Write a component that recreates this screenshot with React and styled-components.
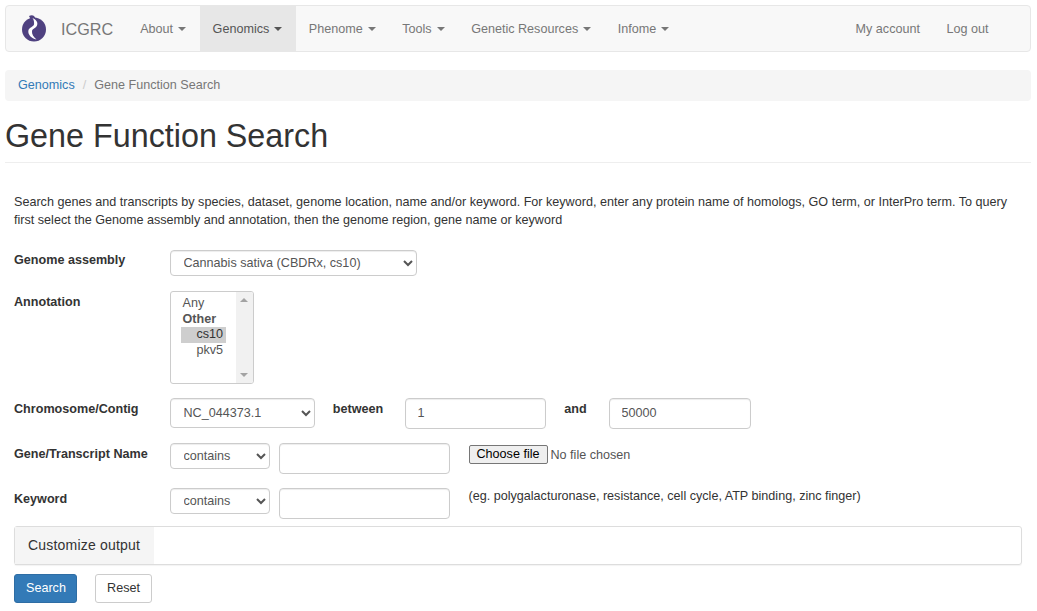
import React from "react";
import styled, { createGlobalStyle } from "styled-components";

const Global = createGlobalStyle`
  html, body { margin: 0; padding: 0; background: #fff; overflow: hidden; }
  body { font-family: "Liberation Sans", Arial, sans-serif; font-size: 12.6px; line-height: 18px; color: #333; }
  * { box-sizing: border-box; }
`;

const Page = styled.div`
  padding: 5px 6px 0 5px;
`;
const Navbar = styled.nav`
  display: flex;
  height: 47px;
  background: #f8f8f8;
  border: 1px solid #e7e7e7;
  border-radius: 4px;
  margin-bottom: 18px;
`;
const Brand = styled.a`
  display: flex;
  align-items: center;
  gap: 14px;
  padding: 0 14px 0 15px;
  font-size: 16.2px;
  color: #777;
`;
const NavItem = styled.a`
  display: flex;
  align-items: center;
  padding: 0 13.5px 0 13px;
  color: ${p => (p.$active ? "#555" : "#777")};
  background: ${p => (p.$active ? "#e7e7e7" : "transparent")};
`;
const Caret = styled.span`
  display: inline-block;
  margin-left: 5px;
  border-top: 4px solid;
  border-left: 4px solid transparent;
  border-right: 4px solid transparent;
`;
const Spacer = styled.div`
  flex: 1;
`;
const NavEnd = styled.div`
  width: 28px;
`;
const Breadcrumb = styled.div`
  height: 31px;
  display: flex;
  align-items: center;
  padding: 0 13px 2px;
  background: #f5f5f5;
  border-radius: 4px;
  margin-bottom: 14px;
  color: #777;
`;
const Crumb = styled.a`
  color: #337ab7;
`;
const Sep = styled.span`
  color: #ccc;
  padding: 0 8px;
`;
const Heading = styled.h1`
  margin: 0;
  font-size: 32.3px;
  font-weight: 400;
  line-height: 36px;
  height: 48px;
  padding-top: 3px;
  border-bottom: 1px solid #eee;
  color: #333;
`;
const Form = styled.form`
  padding: 0 9px;
`;
const Intro = styled.p`
  margin: 30px 0 0;
  line-height: 18px;
`;
const Row = styled.div`
  display: flex;
  align-items: flex-start;
  margin-top: ${p => p.$top}px;
`;
const Label = styled.label`
  width: 155.5px;
  flex: none;
  font-weight: 700;
  line-height: 18px;
  padding-top: ${p => (p.$tight ? 1 : 2)}px;
`;
const Select = styled.select`
  height: ${p => p.$h || 30}px;
  width: ${p => p.$w}px;
  margin-right: ${p => p.$mr || 0}px;
  flex: none;
  padding: 0 9px;
  font: 12.6px "Liberation Sans", Arial, sans-serif;
  color: #555;
  background: #fff;
  border: 1px solid #ccc;
  border-radius: 4px;
  box-shadow: inset 0 1px 1px rgba(0,0,0,.075);
`;
const ListBox = styled.div`
  display: flex;
  width: 84px;
  height: 93px;
  background: #fff;
  border: 1px solid #ccc;
  border-radius: 3px;
  overflow: hidden;
`;
const ListArea = styled.div`
  flex: 1;
  padding: 4px 10px;
  line-height: 15.5px;
  color: #555;
`;
const ListOption = styled.div`
  padding-left: ${p => (p.$nested ? 16 : 2)}px;
  height: 15.5px;
  color: ${p => (p.$selected ? "#333" : "#555")};
  background: ${p => (p.$selected ? "#cecece" : "transparent")};
`;
const ListGroup = styled.div`
  padding-left: 2px;
  height: 15.5px;
  font-weight: 700;
`;
const ScrollTrack = styled.div`
  flex: none;
  width: 17px;
  background: #f1f1f1;
  display: flex;
  flex-direction: column;
  align-items: center;
  justify-content: space-between;
  padding: 6px 0;
`;
const ScrollArrow = styled.span`
  width: 0;
  height: 0;
  border-left: 4px solid transparent;
  border-right: 4px solid transparent;
  ${p => (p.$down ? "border-top: 4px solid #a3a3a3;" : "border-bottom: 4px solid #a3a3a3;")}
`;
const Input = styled.input`
  height: 31px;
  width: ${p => p.$w}px;
  flex: none;
  padding: 0 12px 1px;
  font: 12.6px "Liberation Sans", Arial, sans-serif;
  color: #555;
  border: 1px solid #ccc;
  border-radius: 4px;
  box-shadow: inset 0 1px 1px rgba(0,0,0,.075);
`;
const Conj = styled.b`
  line-height: 18px;
  flex: none;
  width: ${p => p.$w}px;
  padding: 2px 3px 0 0;
  text-align: center;
`;
const FileWrap = styled.div`
  margin-left: 19px;
  margin-top: 2px;
  display: flex;
  align-items: center;
  color: #555;
`;
const FileBtn = styled.button`
  height: 19px;
  width: 79px;
  padding: 0 0 2px;
  font: 12.6px "Liberation Sans", Arial, sans-serif;
  color: #000;
  background: #efefef;
  border: 1px solid #767676;
  border-radius: 2px;
  margin-right: 3px;
`;
const Hint = styled.div`
  margin: 1px 0 0 19px;
  line-height: 15px;
`;
const Accordion = styled.div`
  margin-top: 7px;
  height: 39px;
  border: 1px solid #ddd;
  border-radius: 3px;
  box-shadow: 0 1px 1px rgba(0,0,0,.05);
  display: flex;
`;
const AccordionHead = styled.div`
  background: #f5f5f5;
  padding: 0 13.5px 1px 13px;
  display: flex;
  align-items: center;
  font-size: 14px;
  letter-spacing: 0.2px;
  color: #333;
  border-bottom: 1px solid #ddd;
  height: 38px;
`;
const Actions = styled.div`
  display: flex;
  gap: 18px;
  margin-top: 9px;
`;
const Button = styled.button`
  height: 29px;
  padding: 0 11px 2px;
  width: ${p => (p.$primary ? 63 : 57)}px;
  font: 12.6px "Liberation Sans", Arial, sans-serif;
  color: ${p => (p.$primary ? "#fff" : "#333")};
  background: ${p => (p.$primary ? "#337ab7" : "#fff")};
  border: 1px solid ${p => (p.$primary ? "#2e6da4" : "#ccc")};
  border-radius: 3px;
`;

const Logo = () => (
  <svg width="26" height="27" viewBox="0 0 26 27">
    <circle cx="13" cy="14.5" r="12" fill="#4f4180" />
    <path d="M8 1 C10 0 12 0.2 13 1 L15 4 L10 5 Z" fill="#4f4180" />
    <path d="M11.5 3 C15.5 4.5 17.5 8 15.8 11 C14.4 13.4 11.5 13.5 11 16 C10.6 19 12.5 22 15.5 24.5 C10.5 23.5 6.6 19.5 7.4 15.5 C8.3 12 12.4 12 13 9.5 C13.3 7.5 13 5 11.5 3 Z" fill="#fff" />
  </svg>
);

const nav = [
  ["About"],
  ["Genomics", true],
  ["Phenome"],
  ["Tools"],
  ["Genetic Resources"],
  ["Infome"],
];

export default function App() {
  return (
    <Page>
      <Global />
      <Navbar>
        <Brand><Logo />ICGRC</Brand>
        {nav.map(([t, a]) => (
          <NavItem key={t} $active={a}>{t}<Caret /></NavItem>
        ))}
        <Spacer />
        <NavItem>My account</NavItem>
        <NavItem>Log out</NavItem>
        <NavEnd />
      </Navbar>
      <Breadcrumb>
        <Crumb>Genomics</Crumb><Sep>/</Sep>Gene Function Search
      </Breadcrumb>
      <Heading>Gene Function Search</Heading>
      <Form>
        <Intro>
          Search genes and transcripts by species, dataset, genome location, name and/or keyword. For keyword, enter any protein name of homologs, GO term, or InterPro term. To query first select the Genome assembly and annotation, then the genome region, gene name or keyword
        </Intro>
        <Row $top={21}>
          <Label $tight>Genome assembly</Label>
          <Select $w={247} $h={26} defaultValue="a">
            <option value="a">Cannabis sativa (CBDRx, cs10)</option>
          </Select>
        </Row>
        <Row $top={15}>
          <Label>Annotation</Label>
          <ListBox role="listbox" aria-multiselectable="true">
            <ListArea>
              <ListOption role="option">Any</ListOption>
              <ListGroup>Other</ListGroup>
              <ListOption role="option" $nested $selected aria-selected="true">cs10</ListOption>
              <ListOption role="option" $nested>pkv5</ListOption>
            </ListArea>
            <ScrollTrack>
              <ScrollArrow />
              <ScrollArrow $down />
            </ScrollTrack>
          </ListBox>
        </Row>
        <Row $top={14}>
          <Label>Chromosome/Contig</Label>
          <Select $w={145} defaultValue="n"><option value="n">NC_044373.1</option></Select>
          <Conj $w={90}>between</Conj>
          <Input $w={141} defaultValue="1" />
          <Conj $w={63}>and</Conj>
          <Input $w={142} defaultValue="50000" />
        </Row>
        <Row $top={14}>
          <Label>Gene/Transcript Name</Label>
          <Select $w={100} $h={26} $mr={9}><option>contains</option></Select>
          <Input $w={171} />
          <FileWrap><FileBtn type="button">Choose file</FileBtn>No file chosen</FileWrap>
        </Row>
        <Row $top={14}>
          <Label>Keyword</Label>
          <Select $w={100} $h={26} $mr={9}><option>contains</option></Select>
          <Input $w={171} />
          <Hint>(eg. polygalacturonase, resistance, cell cycle, ATP binding, zinc finger)</Hint>
        </Row>
        <Accordion>
          <AccordionHead>Customize output</AccordionHead>
        </Accordion>
        <Actions>
          <Button $primary type="button">Search</Button>
          <Button type="button">Reset</Button>
        </Actions>
      </Form>
    </Page>
  );
}
